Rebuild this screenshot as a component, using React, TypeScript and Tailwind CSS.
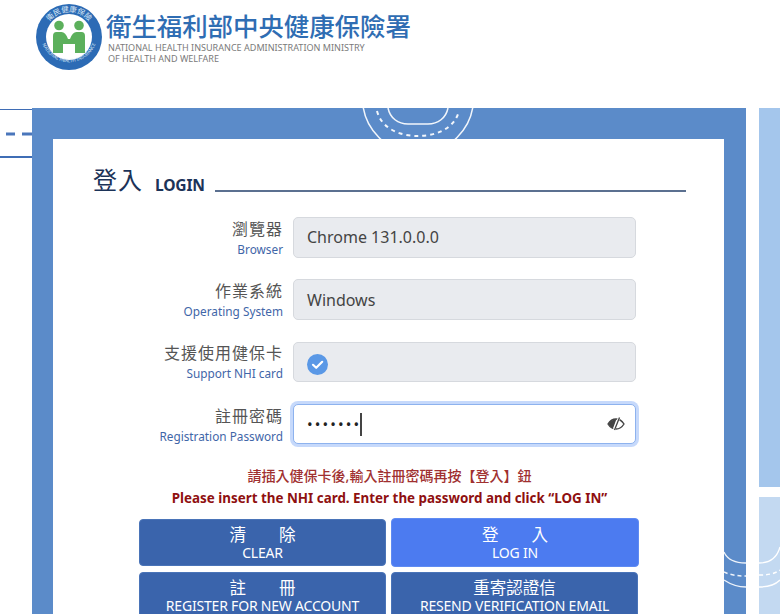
import React from "react";

const font = { fontFamily: '"Noto Sans","Noto Sans CJK TC",sans-serif' };

function Logo() {
  return (
    <svg width="68" height="68" viewBox="0 0 68 68" className="shrink-0">
      <circle cx="34" cy="34" r="33" fill="#2c6bb5" />
      <circle cx="34" cy="34" r="23" fill="#fff" />
      <circle cx="24" cy="22.5" r="4.8" fill="#5cb05c" />
      <circle cx="44" cy="22.5" r="4.8" fill="#5cb05c" />
      <path d="M18 33 q0-4 3.5-4 h5 q4 0 6.5 7 h2 q2.5-7 6.5-7 h5 q3.5 0 3.5 4 v17 h-10 v-9 h-12 v9 h-10 z" fill="#5cb05c" />
      <defs>
        <path id="topArc" d="M9 34 a25 25 0 0 1 50 0" />
        <path id="botArc" d="M6 36 a28.5 28.5 0 0 0 56 0" />
      </defs>
      <text fontSize="7.5" fill="#dbe8f5" style={font}>
        <textPath href="#topArc" startOffset="50%" textAnchor="middle">衛民健康保險</textPath>
      </text>
      <text fontSize="4.6" fill="#dbe8f5" style={font}>
        <textPath href="#botArc" startOffset="50%" textAnchor="middle">NATIONAL HEALTH INSURANCE</textPath>
      </text>
    </svg>
  );
}

function Row({ zh, en, children, focus }: { zh: string; en: string; children: React.ReactNode; focus?: boolean }) {
  return (
    <div className="flex items-center h-[40.5px] mb-[21.8px]">
      <div className="w-[190px] text-right shrink-0 pt-[2px]">
        <div className="text-[16px] leading-[21px] text-[#555] tracking-[1px] whitespace-nowrap">{zh}</div>
        <div className="text-[11.8px] leading-[18px] text-[#3f66a8] whitespace-nowrap">{en}</div>
      </div>
      <div
        className={
          focus
            ? "ml-[10px] w-[343px] h-[40.5px] rounded-[5px] bg-white border border-[#8db2ee] shadow-[0_0_0_3px_#c6d9fb] flex items-center pl-[14px] pr-[10px] text-[16px] text-[#444]"
            : "ml-[10px] w-[343px] h-[40.5px] rounded-[5px] bg-[#e9ebef] border border-[#d6d9de] flex items-center pl-[13px] pr-[10px] text-[16px] text-[#444]"
        }
      >
        {children}
      </div>
    </div>
  );
}

function Btn({ zh, en, primary }: { zh: string; en: string; primary?: boolean }) {
  return (
    <div
      className={
        primary
          ? "h-[49px] -my-px w-[248px] pt-[5px] rounded-[4px] bg-[#4c7bf0] border border-[#5f8bf2] flex flex-col items-center justify-start text-white"
          : "h-[47px] w-[247px] pt-[4px] rounded-[4px] bg-[#3a64ac] border border-[#4a74b8] flex flex-col items-center justify-start text-white"
      }
    >
      <div className="text-[16.5px] leading-[21px]">{zh}</div>
      <div className="text-[14px] leading-[16px] tracking-[-0.2px] whitespace-nowrap">{en}</div>
    </div>
  );
}

export default function App() {
  return (
    <div className="w-[780px] h-[614px] overflow-hidden bg-white" style={font}>
      <header className="h-[108px] flex items-start pl-[35px] pt-[3px]">
        <Logo />
        <div className="ml-[3px]">
          <div className="text-[25.5px] leading-[28px] mt-[9px] text-[#2f6db3] font-medium tracking-[-0.1px] whitespace-nowrap">
            衛生福利部中央健康保險署
          </div>
          <div className="text-[9.05px] leading-[11px] mt-[2px] ml-[2px] text-[#7a7a7a] whitespace-nowrap">
            NATIONAL HEALTH INSURANCE ADMINISTRATION MINISTRY
            <br />
            OF HEALTH AND WELFARE
          </div>
        </div>
      </header>

      <main className="flex items-start h-[506px]">
        <div className="w-[32px] h-[49px] border-t-[1.5px] border-b-2 border-[#3f6db5] relative shrink-0 mt-px">
          <svg width="32" height="4" className="absolute left-0 top-[22px]">
            <path d="M6 2h9M22 2h10" stroke="#4a76bb" strokeWidth="3" />
          </svg>
        </div>

        <section className="relative w-[714px] h-[506px] bg-[#5b8bc9] pt-[31px] pl-[21px] shrink-0 overflow-hidden">
          <svg width="120" height="32" className="absolute left-[326px] top-0">
            <circle cx="60" cy="-10" r="55.5" fill="none" stroke="#f2f6fb" strokeWidth="1.5" />
            <path d="M19 3 C24 22 44 28 60 28 C76 28 96 22 101 3" fill="none" stroke="#f2f6fb" strokeWidth="2" strokeDasharray="4 4" />
            <path d="M30 0 C32 10 40 16 50 16 H70 C80 16 88 10 90 0" fill="none" stroke="#f2f6fb" strokeWidth="1.5" />
          </svg>
          <svg width="22" height="40" className="absolute right-0 top-[443px]">
            <path d="M0 1 C3 8 10 12 22 12" fill="none" stroke="#eef3fa" strokeWidth="1.3" />
            <path d="M0 21 C6 24 14 25 22 25" fill="none" stroke="#eef3fa" strokeWidth="1.5" strokeDasharray="4 3" />
            <path d="M0 29 C6 33 14 36 22 36" fill="none" stroke="#eef3fa" strokeWidth="1.3" />
          </svg>

          <div className="relative w-[671px] h-[475px] bg-white pl-[40px]">
            <div className="flex items-end h-[57px] text-[#1c3358]">
              <span className="text-[24px] leading-[32px] mr-[12px] tracking-[1px]">登入</span>
              <span className="text-[15.6px] font-bold leading-[24px] mb-[-1px] tracking-[-0.2px]">LOGIN</span>
              <div className="ml-[10px] mb-[4px] w-[471px] h-[2px] bg-[#5b7090]" />
            </div>

            <div className="mt-[21px]">
              <Row zh="瀏覽器" en="Browser">Chrome 131.0.0.0</Row>
              <Row zh="作業系統" en="Operating System">Windows</Row>
              <Row zh="支援使用健保卡" en="Support NHI card">
                <svg width="21" height="21" viewBox="0 0 21 21" className="mt-[6px]">
                  <circle cx="10.5" cy="10.5" r="10.5" fill="#5a98e6" />
                  <path d="M6 10.8l3.2 3 6-6" stroke="#fff" strokeWidth="2.2" fill="none" strokeLinecap="round" strokeLinejoin="round" />
                </svg>
              </Row>
              <Row zh="註冊密碼" en="Registration Password" focus>
                <span className="text-[15px] leading-none tracking-[2.1px] text-[#222] -ml-[1px]">•••••••</span>
                <span className="w-[1.5px] h-[23px] bg-[#444] -ml-[1px]" />
                <svg width="18" height="16" viewBox="0 0 18 16" className="ml-auto">
                  <path d="M1 8 C3.5 4 6 3 9 3 C12 3 14.5 4 17 8 C14.5 12 12 13 9 13 C6 13 3.5 12 1 8Z" fill="none" stroke="#444" strokeWidth="1.4" />
                  <path d="M1.5 8 C3.5 5 6 3.5 9.5 3 L6 12.5 C4 12 2.5 10 1.5 8Z" fill="#444" />
                  <path d="M12 2 L7 14" stroke="#fff" strokeWidth="2.4" />
                  <path d="M12.5 1.5 L7.5 14" stroke="#444" strokeWidth="1.3" />
                </svg>
              </Row>
            </div>

            <div className="-ml-[40px] w-[671px] text-center mt-[3px] pl-[2px]">
              <div className="text-[14px] leading-[20px] font-medium text-[#a03030]">請插入健保卡後,輸入註冊密碼再按【登入】鈕</div>
              <div className="text-[13.4px] leading-[22px] mt-[1px] font-bold text-[#8f1010]">Please insert the NHI card. Enter the password and click “LOG IN”</div>
            </div>

            <div className="ml-[46px] mt-[10px] grid grid-cols-[247px_248px] gap-x-[5px] gap-y-[6px]">
              <Btn zh="清　　除" en="CLEAR" />
              <Btn zh="登　　入" en="LOG IN" primary />
              <Btn zh="註　　冊" en="REGISTER FOR NEW ACCOUNT" />
              <Btn zh="重寄認證信" en="RESEND VERIFICATION EMAIL" />
            </div>
          </div>
        </section>

        <aside className="relative ml-[13px] w-[21px] h-[506px] overflow-hidden shrink-0">
          <div className="h-[379px] bg-[#a4c6ec]" />
          <div className="mt-[10px] h-[117px] bg-[#c3d9f1]" />
          <svg width="21" height="50" className="absolute left-0 top-[435px]">
            <path d="M0 20 C10 20 18 15 21 4" fill="none" stroke="#fff" strokeWidth="1.3" />
            <path d="M0 32 C8 32 16 31 21 27" fill="none" stroke="#fff" strokeWidth="1.5" strokeDasharray="4 3" />
            <path d="M0 44 C8 44 16 42 21 37" fill="none" stroke="#fff" strokeWidth="1.3" />
          </svg>
        </aside>
      </main>
    </div>
  );
}
